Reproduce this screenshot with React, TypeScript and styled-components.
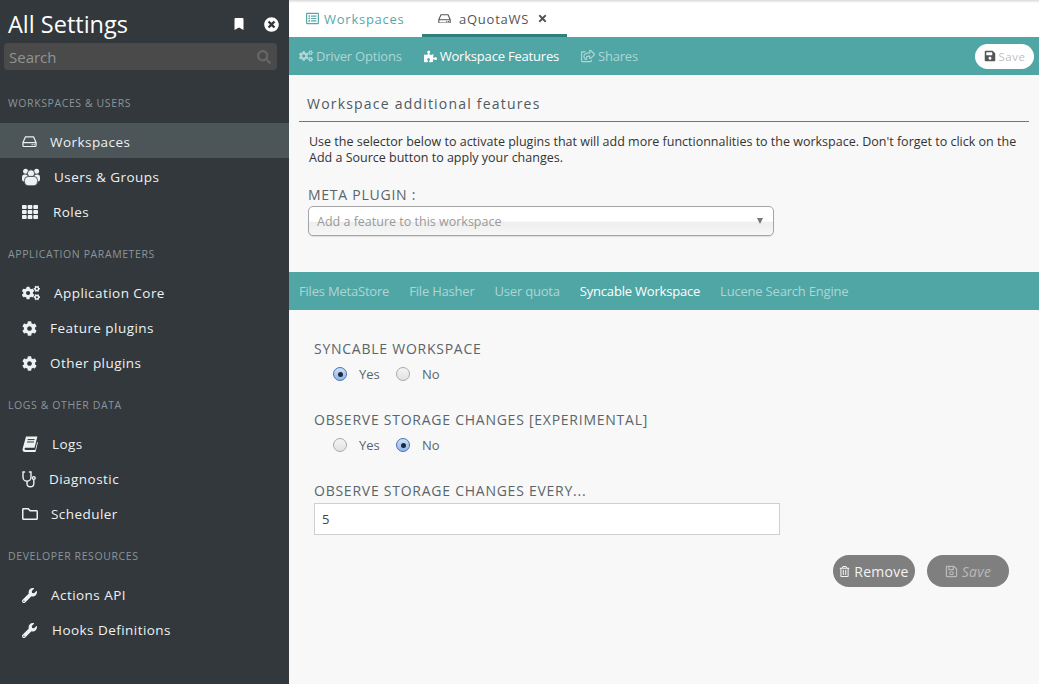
import React from "react"
import styled, { createGlobalStyle } from "styled-components"
import {
  FaBookmark,
  FaCog,
  FaCogs,
  FaPuzzlePiece,
  FaRegFolder,
  FaRegListAlt,
  FaRegSave,
  FaRegShareSquare,
  FaRegTrashAlt,
  FaSave,
  FaSearch,
  FaTh,
  FaTimes,
  FaTimesCircle,
  FaWrench
} from "react-icons/fa"

const GlobalStyle = createGlobalStyle`
  html, body {
    margin: 0;
    padding: 0;
    height: 100%;
    overflow: hidden;
    background: #f8f8f8;
  }
  * {
    box-sizing: border-box;
  }
`

const Page = styled.div`
  display: flex;
  width: 1039px;
  height: 684px;
  overflow: hidden;
  font-family: "Open Sans", "Liberation Sans", sans-serif;
`

const Sidebar = styled.aside`
  flex: 0 0 289px;
  background: #32383b;
  color: #fff;
`

const SidebarHead = styled.div`
  display: flex;
  align-items: center;
  height: 43px;
  padding: 5px 10px 0 8px;
`

const AppTitle = styled.h1`
  flex: 1;
  margin: 0;
  font-size: 23.5px;
  font-weight: 400;
  line-height: 38px;
`

const HeadIcons = styled.div`
  display: flex;
  align-items: center;
  gap: 19px;
  font-size: 14px;
`

const SearchBox = styled.div`
  display: flex;
  align-items: center;
  justify-content: space-between;
  height: 27px;
  margin: 0 12px 0 4px;
  padding: 0 6px 0 5px;
  border-radius: 4px;
  background: #4b4a4a;
  color: #8f9496;
  font-size: 15px;
`

const Section = styled.section`
  margin-bottom: 18px;
  &:first-of-type {
    margin-top: 25px;
  }
`

const SectionTitle = styled.div`
  height: 16px;
  margin-bottom: 12px;
  padding-left: 8px;
  color: #8b9599;
  font-size: 10.5px;
  font-weight: 400;
  line-height: 16px;
  letter-spacing: 0.6px;
  text-transform: uppercase;
`

const NavItem = styled.div<{ $active?: boolean }>`
  display: flex;
  align-items: center;
  height: 35px;
  padding: 3px 0 0 22px;
  background: ${p => (p.$active ? "#4c5558" : "transparent")};
  color: #eef1f2;
  font-size: 13.5px;
  letter-spacing: 0.45px;
`

const NavIcon = styled.span<{ $slot: number }>`
  display: flex;
  align-items: center;
  flex: 0 0 ${p => p.$slot}px;
  font-size: 15px;
`

const Main = styled.main`
  flex: 1;
  min-width: 0;
  background: #f8f8f8;
`

const TabBar = styled.div`
  display: flex;
  height: 37px;
  padding-left: 17px;
  background: #fff;
  box-shadow: inset 0 3px 3px -2px #cfcfcf;
  font-size: 13px;
  letter-spacing: 0.75px;
`

const Tab = styled.div<{ $active?: boolean }>`
  display: flex;
  align-items: center;
  gap: ${p => (p.$active ? "8px" : "5px")};
  width: ${p => (p.$active ? "145px" : "116px")};
  padding: 3px 0 0 ${p => (p.$active ? "16px" : "0")};
  border-bottom: 3px solid ${p => (p.$active ? "#2f7f7e" : "transparent")};
  color: ${p => (p.$active ? "#555" : "#5aa7a6")};
`

const TabClose = styled.span`
  display: flex;
  margin-left: 0;
  color: #555;
  font-size: 11px;
`

const TealBar = styled.div`
  display: flex;
  align-items: center;
  gap: 22px;
  height: 38px;
  padding: 0 5px 0 10px;
  background: #4fa6a5;
  font-size: 13px;
  letter-spacing: -0.2px;
`

const TealLink = styled.div<{ $active?: boolean }>`
  display: flex;
  align-items: center;
  gap: 3px;
  color: ${p => (p.$active ? "#fff" : "rgba(255, 255, 255, 0.55)")};
  font-weight: 400;
  white-space: nowrap;
`

const HeadSave = styled.div`
  display: flex;
  align-items: center;
  justify-content: center;
  gap: 3px;
  width: 59px;
  height: 25px;
  margin-left: auto;
  border-radius: 13px;
  background: #fff;
  color: #bfbfbf;
  font-size: 11.5px;
  letter-spacing: 0.5px;

  svg {
    color: #555;
  }
`

const Features = styled.div`
  height: 197px;
  padding: 19px 10px 0;
`

const FeatureTitle = styled.h3`
  margin: 0;
  padding: 0 0 7px 8px;
  border-bottom: 1px solid #6f767b;
  color: #4f5a60;
  font-size: 14px;
  font-weight: 400;
  line-height: 20px;
  letter-spacing: 1.2px;
`

const Help = styled.p`
  margin: 12px 0 0 10px;
  color: #333;
  font-size: 12.5px;
  line-height: 16px;
`

const FieldLabel = styled.div`
  color: #5a656b;
  font-size: 14px;
  line-height: 18px;
  letter-spacing: 0.75px;
  text-transform: uppercase;
`

const MetaLabel = styled(FieldLabel)`
  margin: 20px 0 2px 9px;
`

const MetaSelect = styled.div`
  display: flex;
  align-items: center;
  justify-content: space-between;
  width: 466px;
  height: 30px;
  margin-left: 9px;
  padding: 0 10px 0 8px;
  border: 1px solid #a5a5a5;
  border-radius: 5px;
  background: linear-gradient(#fff 50%, #eeeeee 55%, #f7f7f7);
  box-shadow: 0 1px 1px rgba(0, 0, 0, 0.1);
  color: #999;
  font-size: 12.5px;
`

const Caret = styled.span`
  width: 0;
  height: 0;
  border-left: 3.5px solid transparent;
  border-right: 3.5px solid transparent;
  border-top: 6px solid #777;
`

const SubTabs = styled(TealBar)`
  gap: 20px;
`

const Form = styled.form`
  padding: 30px 25px 0;
`

const Field = styled.div`
  height: 71px;
`

const RadioRow = styled.div`
  display: flex;
  align-items: center;
  height: 20px;
  margin-top: 6px;
  padding-left: 19px;
`

const RadioOption = styled.label`
  display: flex;
  align-items: center;
  gap: 12px;
  width: 63px;
  color: #5a656b;
  font-size: 13px;
`

const Radio = styled.input.attrs(() => ({ type: "radio", readOnly: true }))`
  appearance: none;
  display: grid;
  place-items: center;
  width: 14px;
  height: 14px;
  margin: 0;
  border: 1px solid #a8a8a8;
  border-radius: 50%;
  background: linear-gradient(#f4f4f4, #e2e2e2);

  &:checked {
    border-color: #4c72b0;
    background: linear-gradient(#cfe0f7, #8fb6ea);
  }

  &:checked::after {
    content: "";
    width: 5px;
    height: 5px;
    border-radius: 50%;
    background: #1c2a40;
  }
`

const TextInput = styled.input`
  display: block;
  width: 466px;
  height: 32px;
  margin-top: 3px;
  padding: 0 7px;
  border: 1px solid #d0d0d0;
  background: #fff;
  color: #444;
  font: inherit;
  font-size: 13px;
  outline: 0;
`

const Actions = styled.div`
  display: flex;
  justify-content: flex-end;
  gap: 12px;
  margin: 20px 5px 0 0;
`

const PillButton = styled.button<{ $disabled?: boolean }>`
  display: flex;
  align-items: center;
  justify-content: center;
  gap: 4px;
  width: 82px;
  height: 32px;
  padding: 0;
  border: 0;
  border-radius: 16px;
  background: #7f7f7f;
  color: ${p => (p.$disabled ? "#b9b9b9" : "#f4f4f4")};
  font-family: inherit;
  font-size: 14px;
  font-style: ${p => (p.$disabled ? "italic" : "normal")};
  font-weight: 400;
  letter-spacing: 0.3px;
`

const HddIcon: React.FC<{ size?: number }> = ({ size = 15 }) => (
  <svg width={size} height={(size * 12) / 16} viewBox="0 0 16 12" fill="none">
    <path
      d="M1 7 3.6 1h8.8L15 7v3.2a1 1 0 0 1-1 1H2a1 1 0 0 1-1-1zM1 7h14"
      stroke="currentColor"
      strokeWidth="1.3"
      strokeLinejoin="round"
    />
    <path
      d="M10.2 8.6h1.2v1.2h-1.2zM12.4 8.6h1.2v1.2h-1.2z"
      fill="currentColor"
    />
  </svg>
)

const UsersIcon: React.FC = () => (
  <svg width="18" height="18" viewBox="0 0 18 18" fill="#eef1f2">
    <circle cx="3.6" cy="3.2" r="2.5" />
    <circle cx="14.6" cy="3.2" r="2.5" />
    <rect x="0" y="6.6" width="6" height="7" rx="2.6" />
    <rect x="12" y="6.6" width="6" height="7" rx="2.6" />
    <circle cx="9" cy="5.4" r="3.6" stroke="#32383b" strokeWidth="0.8" />
    <rect
      x="2.4"
      y="8.4"
      width="13.2"
      height="9.4"
      rx="4"
      stroke="#32383b"
      strokeWidth="0.8"
    />
  </svg>
)

const BookIcon: React.FC = () => (
  <svg width="16" height="16" viewBox="0 0 16 16" fill="#eef1f2">
    <path d="M4 .6h11.4l-2.9 11.2H3.7c-1.5 0-1.6 2.1 0 2.1h9.5l2-8 .7.7-2.4 9.4H3C1 16 .1 14.2.7 12.4z" />
    <path d="M5.6 3.6h7M5 6h7" stroke="#32383b" strokeWidth="1" />
  </svg>
)

const StethoscopeIcon: React.FC = () => (
  <svg
    width="14"
    height="17"
    viewBox="0 0 14 17"
    fill="none"
    stroke="#eef1f2"
    strokeWidth="1.4"
    strokeLinecap="round"
  >
    <path d="M2.6 1H1v5.2a4 4 0 0 0 8 0V1H7.4" />
    <path d="M5 10.4v2a3.4 3.4 0 0 0 6.8 0V8.6" />
    <circle cx="11.8" cy="7" r="1.4" />
  </svg>
)

const nav = [
  {
    title: "Workspaces & Users",
    items: [
      { label: "Workspaces", icon: <HddIcon />, slot: 28, active: true },
      { label: "Users & Groups", icon: <UsersIcon />, slot: 32 },
      { label: "Roles", icon: <FaTh size={16} />, slot: 31 }
    ]
  },
  {
    title: "Application Parameters",
    items: [
      { label: "Application Core", icon: <FaCogs size={18} />, slot: 32 },
      { label: "Feature plugins", icon: <FaCog />, slot: 28 },
      { label: "Other plugins", icon: <FaCog />, slot: 28 }
    ]
  },
  {
    title: "Logs & other data",
    items: [
      { label: "Logs", icon: <BookIcon />, slot: 30 },
      { label: "Diagnostic", icon: <StethoscopeIcon />, slot: 27 },
      { label: "Scheduler", icon: <FaRegFolder size={16} />, slot: 29 }
    ]
  },
  {
    title: "Developer Resources",
    items: [
      { label: "Actions API", icon: <FaWrench />, slot: 29 },
      { label: "Hooks Definitions", icon: <FaWrench />, slot: 30 }
    ]
  }
]

const subTabs = [
  "Files MetaStore",
  "File Hasher",
  "User quota",
  "Syncable Workspace",
  "Lucene Search Engine"
]

const YesNo: React.FC<{ name: string; value: "yes" | "no" }> = ({
  name,
  value
}) => (
  <RadioRow>
    <RadioOption>
      <Radio name={name} checked={value === "yes"} />
      Yes
    </RadioOption>
    <RadioOption>
      <Radio name={name} checked={value === "no"} />
      No
    </RadioOption>
  </RadioRow>
)

const App: React.FC = () => {
  return (
    <Page>
      <GlobalStyle />
      <Sidebar>
        <SidebarHead>
          <AppTitle>All Settings</AppTitle>
          <HeadIcons>
            <FaBookmark size={12} />
            <FaTimesCircle size={15} />
          </HeadIcons>
        </SidebarHead>
        <SearchBox>
          Search
          <FaSearch size={14} color="#666" />
        </SearchBox>
        {nav.map(section => (
          <Section key={section.title}>
            <SectionTitle>{section.title}</SectionTitle>
            {section.items.map(item => (
              <NavItem key={item.label} $active={item.active}>
                <NavIcon $slot={item.slot}>{item.icon}</NavIcon>
                {item.label}
              </NavItem>
            ))}
          </Section>
        ))}
      </Sidebar>
      <Main>
        <TabBar>
          <Tab>
            <FaRegListAlt size={13} />
            Workspaces
          </Tab>
          <Tab $active>
            <HddIcon size={13} />
            aQuotaWS
            <TabClose>
              <FaTimes />
            </TabClose>
          </Tab>
        </TabBar>
        <TealBar>
          <TealLink>
            <FaCogs size={14} />
            Driver Options
          </TealLink>
          <TealLink $active>
            <FaPuzzlePiece size={13} />
            Workspace Features
          </TealLink>
          <TealLink>
            <FaRegShareSquare size={14} />
            Shares
          </TealLink>
          <HeadSave>
            <FaSave size={12} />
            Save
          </HeadSave>
        </TealBar>
        <Features>
          <FeatureTitle>Workspace additional features</FeatureTitle>
          <Help>
            Use the selector below to activate plugins that will add more
            functionnalities to the workspace. Don't forget to click on the Add
            a Source button to apply your changes.
          </Help>
          <MetaLabel>Meta Plugin :</MetaLabel>
          <MetaSelect>
            Add a feature to this workspace
            <Caret />
          </MetaSelect>
        </Features>
        <SubTabs>
          {subTabs.map(name => (
            <TealLink key={name} $active={name === "Syncable Workspace"}>
              {name}
            </TealLink>
          ))}
        </SubTabs>
        <Form>
          <Field>
            <FieldLabel>Syncable Workspace</FieldLabel>
            <YesNo name="sync" value="yes" />
          </Field>
          <Field>
            <FieldLabel>Observe Storage Changes [Experimental]</FieldLabel>
            <YesNo name="observe" value="no" />
          </Field>
          <FieldLabel>Observe Storage Changes Every...</FieldLabel>
          <TextInput defaultValue="5" />
          <Actions>
            <PillButton type="button">
              <FaRegTrashAlt size={11} />
              Remove
            </PillButton>
            <PillButton type="button" $disabled>
              <FaRegSave size={13} />
              Save
            </PillButton>
          </Actions>
        </Form>
      </Main>
    </Page>
  )
}

export default App
